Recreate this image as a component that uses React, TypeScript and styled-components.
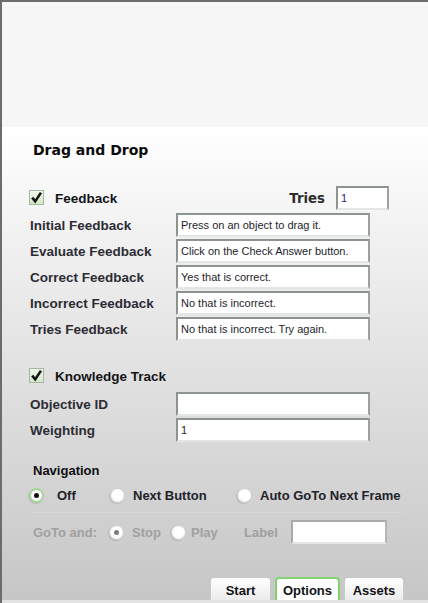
import React from "react";
import styled, { createGlobalStyle } from "styled-components";

const Global = createGlobalStyle`
  html, body { margin: 0; padding: 0; background: #ffffff; }
  body { font-family: "Liberation Sans", Arial, sans-serif; }
`;

const Frame = styled.div`
  width: 428px;
  height: 603px;
  box-sizing: border-box;
  border-top: 2px solid #6c6c6c;
  border-left: 2px solid #6c6c6c;
  display: flex;
  flex-direction: column;
  overflow: hidden;
`;

const Stage = styled.div`
  height: 125px;
  flex: none;
  background: #f6f6f6;
`;

const Panel = styled.div`
  flex: 1;
  display: flex;
  flex-direction: column;
  background: linear-gradient(to bottom, #ffffff 0%, #f3f3f3 20%, #dcdcdc 60%, #c6c6c6 100%);
`;

const Content = styled.div`
  display: flex;
  flex-direction: column;
  padding: 13px 0 0 27px;
`;

const Title = styled.div`
  margin-left: 4px;
  height: 20px;
  line-height: 20px;
  font-family: "DejaVu Sans", Verdana, sans-serif;
  font-weight: bold;
  font-size: 14px;
  color: #0a0a0a;
`;

const HeaderRow = styled.div<{ $top: number }>`
  margin-top: ${(p) => p.$top}px;
  width: 360px;
  height: 24px;
  display: flex;
  align-items: center;
`;

const CheckBox = styled.span`
  width: 13px;
  height: 13px;
  flex: none;
  border: 1px solid #a7b8a0;
  background: linear-gradient(to bottom, #f0f8ea, #d3e8c8);
  display: flex;
  align-items: center;
  justify-content: center;
  margin-top: -1px;
`;

const HeaderLabel = styled.span`
  margin-left: 11px;
  font-weight: bold;
  font-size: 13.5px;
  color: #141418;
`;

const TriesLabel = styled.span`
  margin-left: auto;
  font-family: "DejaVu Sans", Verdana, sans-serif;
  font-weight: bold;
  font-size: 13.3px;
  color: #2e2e2e;
`;

const FieldList = styled.div<{ $top: number }>`
  margin-top: ${(p) => p.$top}px;
  display: flex;
  flex-direction: column;
  gap: 2px;
`;

const FieldRow = styled.div`
  display: grid;
  grid-template-columns: 147px 194px;
  align-items: center;
  height: 24px;
`;

const FieldLabel = styled.span`
  padding-left: 1px;
  padding-top: 1px;
  font-weight: bold;
  font-size: 13.5px;
  color: #2c2c34;
`;

const TextBox = styled.div<{ $w: number; $muted?: boolean }>`
  box-sizing: border-box;
  width: ${(p) => p.$w}px;
  height: 24px;
  background: #ffffff;
  border-top: 2px solid ${(p) => (p.$muted ? "#a9aaaa" : "#8d9292")};
  border-left: 2px solid ${(p) => (p.$muted ? "#a9aaaa" : "#8d9292")};
  border-right: 2px solid ${(p) => (p.$muted ? "#b5b6b6" : "#9ca0a0")};
  border-bottom: 2px solid ${(p) => (p.$muted ? "#e6e6e6" : "#e3e6e6")};
  padding-left: 3px;
  font-size: 11px;
  line-height: 20px;
  color: #1e1e2a;
  white-space: nowrap;
  overflow: hidden;
`;

const SectionTitle = styled.div`
  margin-top: 20px;
  margin-left: 4px;
  height: 18px;
  line-height: 18px;
  font-weight: bold;
  font-size: 13px;
  color: #0e0e12;
`;

const RadioRow = styled.div`
  margin-top: 5px;
  height: 20px;
  display: grid;
  grid-template-columns: 81px 127px auto;
  align-items: center;
`;

const Separator = styled.div`
  margin: 7px 26px 0 4px;
  height: 1px;
  background: rgba(255, 255, 255, 0.16);
`;

const GoToRow = styled.div`
  margin-top: 7px;
  height: 24px;
  display: grid;
  grid-template-columns: 80px 62px 73px 47px auto;
  align-items: center;
`;

const Option = styled.label<{ $gap: number }>`
  display: flex;
  align-items: center;
  gap: ${(p) => p.$gap}px;
`;

const RadioDot = styled.span<{ $on?: boolean; $disabled?: boolean }>`
  box-sizing: border-box;
  width: 15px;
  height: 15px;
  flex: none;
  border-radius: 50%;
  border: ${(p) => (p.$on && !p.$disabled ? "2px solid #a3d596" : "1px solid #cfcfcf")};
  background: radial-gradient(circle at 55% 40%, #ffffff 45%, #e9e9e9 100%);
  box-shadow: -1px 1px 1px rgba(0, 0, 0, 0.12);
  display: flex;
  align-items: center;
  justify-content: center;
  &::after {
    content: "";
    display: ${(p) => (p.$on ? "block" : "none")};
    width: 5px;
    height: 5px;
    border-radius: 50%;
    background: ${(p) => (p.$disabled ? "#7a7a7a" : "#111111")};
  }
`;

const OptionText = styled.span<{ $disabled?: boolean }>`
  font-weight: bold;
  font-size: 13px;
  color: ${(p) => (p.$disabled ? "#a0a0a0" : "#22222a")};
`;

const GrayText = styled.span<{ $indent?: number }>`
  margin-left: ${(p) => p.$indent ?? 0}px;
  font-weight: bold;
  font-size: 13px;
  color: #a0a0a0;
`;

const TabBar = styled.div`
  margin-top: auto;
  display: flex;
  gap: 4px;
  padding-left: 208px;
  border-bottom: 3px solid #e3e3e3;
`;

const Tab = styled.div<{ $active?: boolean; $w: number }>`
  box-sizing: border-box;
  width: ${(p) => p.$w}px;
  height: 23px;
  border: ${(p) => (p.$active ? "2px solid #82d370" : "1px solid #c9c9c9")};
  border-bottom: none;
  border-radius: 4px 4px 0 0;
  background: ${(p) => (p.$active ? "#ffffff" : "linear-gradient(to bottom, #ffffff, #ebebeb)")};
  display: flex;
  align-items: center;
  justify-content: center;
  padding-top: 2px;
  font-weight: bold;
  font-size: 13px;
  color: #121216;
`;

const Check = () => (
  <svg width="13" height="13" viewBox="0 0 13 13">
    <path d="M2.2 6.6 L5.2 10.4 L11 1.6" fill="none" stroke="#151515" strokeWidth="2.6" strokeLinejoin="miter" />
  </svg>
);

const feedbackRows = [
  ["Initial Feedback", "Press on an object to drag it."],
  ["Evaluate Feedback", "Click on the Check Answer button."],
  ["Correct Feedback", "Yes that is correct."],
  ["Incorrect Feedback", "No that is incorrect."],
  ["Tries Feedback", "No that is incorrect. Try again."],
];

const trackRows = [
  ["Objective ID", ""],
  ["Weighting", "1"],
];

export default function App() {
  return (
    <>
      <Global />
      <Frame>
        <Stage />
        <Panel>
          <Content>
            <Title>Drag and Drop</Title>
            <HeaderRow $top={26}>
              <CheckBox>
                <Check />
              </CheckBox>
              <HeaderLabel>Feedback</HeaderLabel>
              <TriesLabel>Tries</TriesLabel>
              <TextBox $w={53} style={{ marginLeft: 11, color: "#2a1f7a" }}>1</TextBox>
            </HeaderRow>
            <FieldList $top={3}>
              {feedbackRows.map(([label, value]) => (
                <FieldRow key={label}>
                  <FieldLabel>{label}</FieldLabel>
                  <TextBox $w={194}>{value}</TextBox>
                </FieldRow>
              ))}
            </FieldList>
            <HeaderRow $top={23}>
              <CheckBox>
                <Check />
              </CheckBox>
              <HeaderLabel>Knowledge Track</HeaderLabel>
            </HeaderRow>
            <FieldList $top={4}>
              {trackRows.map(([label, value]) => (
                <FieldRow key={label}>
                  <FieldLabel>{label}</FieldLabel>
                  <TextBox $w={194}>{value}</TextBox>
                </FieldRow>
              ))}
            </FieldList>
            <SectionTitle>Navigation</SectionTitle>
            <RadioRow>
              <Option $gap={13}>
                <RadioDot $on />
                <OptionText>Off</OptionText>
              </Option>
              <Option $gap={8}>
                <RadioDot />
                <OptionText>Next Button</OptionText>
              </Option>
              <Option $gap={8}>
                <RadioDot />
                <OptionText>Auto GoTo Next Frame</OptionText>
              </Option>
            </RadioRow>
            <Separator />
            <GoToRow>
              <GrayText $indent={4}>GoTo and:</GrayText>
              <Option $gap={8}>
                <RadioDot $on $disabled />
                <OptionText $disabled>Stop</OptionText>
              </Option>
              <Option $gap={5}>
                <RadioDot $disabled />
                <OptionText $disabled>Play</OptionText>
              </Option>
              <GrayText>Label</GrayText>
              <TextBox $w={96} $muted />
            </GoToRow>
          </Content>
          <TabBar>
            <Tab $w={61}>Start</Tab>
            <Tab $w={65} $active>Options</Tab>
            <Tab $w={60}>Assets</Tab>
          </TabBar>
        </Panel>
      </Frame>
    </>
  );
}
